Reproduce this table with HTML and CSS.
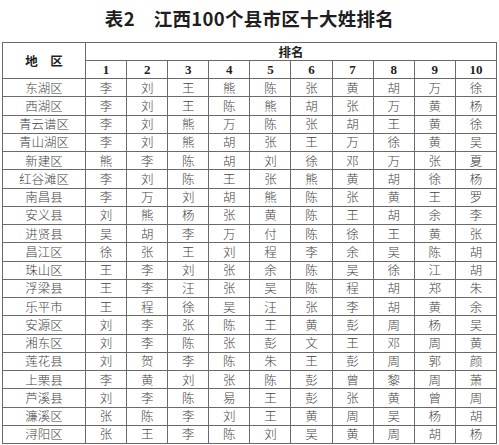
FILE: index.html
```html
<!DOCTYPE html>
<html lang="zh">
<head>
<meta charset="utf-8">
<title>江西100个县市区十大姓排名</title>
<link rel="stylesheet" href="styles.css">
</head>
<body>
<h1 class="title">表2　江西100个县市区十大姓排名</h1>
<table class="rank">
<colgroup><col class="c-area"><col span="10" class="c-num"></colgroup>
<thead>
<tr class="hrow"><th rowspan="2" class="area-h">地　区</th><th colspan="10">排名</th></tr>
<tr class="hrow num"><th>1</th><th>2</th><th>3</th><th>4</th><th>5</th><th>6</th><th>7</th><th>8</th><th>9</th><th>10</th></tr>
</thead>
<tbody>
<tr><td>东湖区</td><td>李</td><td>刘</td><td>王</td><td>熊</td><td>陈</td><td>张</td><td>黄</td><td>胡</td><td>万</td><td>徐</td></tr>
<tr><td>西湖区</td><td>李</td><td>刘</td><td>王</td><td>陈</td><td>熊</td><td>胡</td><td>张</td><td>万</td><td>黄</td><td>杨</td></tr>
<tr><td>青云谱区</td><td>李</td><td>刘</td><td>熊</td><td>万</td><td>陈</td><td>张</td><td>胡</td><td>王</td><td>黄</td><td>徐</td></tr>
<tr><td>青山湖区</td><td>李</td><td>刘</td><td>熊</td><td>胡</td><td>张</td><td>王</td><td>万</td><td>徐</td><td>黄</td><td>吴</td></tr>
<tr><td>新建区</td><td>熊</td><td>李</td><td>陈</td><td>胡</td><td>刘</td><td>徐</td><td>邓</td><td>万</td><td>张</td><td>夏</td></tr>
<tr><td>红谷滩区</td><td>李</td><td>刘</td><td>陈</td><td>王</td><td>张</td><td>熊</td><td>黄</td><td>胡</td><td>徐</td><td>杨</td></tr>
<tr><td>南昌县</td><td>李</td><td>万</td><td>刘</td><td>胡</td><td>熊</td><td>陈</td><td>张</td><td>黄</td><td>王</td><td>罗</td></tr>
<tr><td>安义县</td><td>刘</td><td>熊</td><td>杨</td><td>张</td><td>黄</td><td>陈</td><td>王</td><td>胡</td><td>余</td><td>李</td></tr>
<tr><td>进贤县</td><td>吴</td><td>胡</td><td>李</td><td>万</td><td>付</td><td>陈</td><td>徐</td><td>王</td><td>黄</td><td>张</td></tr>
<tr><td>昌江区</td><td>徐</td><td>张</td><td>王</td><td>刘</td><td>程</td><td>李</td><td>余</td><td>吴</td><td>陈</td><td>胡</td></tr>
<tr><td>珠山区</td><td>王</td><td>李</td><td>刘</td><td>张</td><td>余</td><td>陈</td><td>吴</td><td>徐</td><td>江</td><td>胡</td></tr>
<tr><td>浮梁县</td><td>王</td><td>李</td><td>汪</td><td>张</td><td>吴</td><td>陈</td><td>程</td><td>胡</td><td>郑</td><td>朱</td></tr>
<tr><td>乐平市</td><td>王</td><td>程</td><td>徐</td><td>吴</td><td>汪</td><td>张</td><td>李</td><td>胡</td><td>黄</td><td>余</td></tr>
<tr><td>安源区</td><td>刘</td><td>李</td><td>张</td><td>陈</td><td>王</td><td>黄</td><td>彭</td><td>周</td><td>杨</td><td>吴</td></tr>
<tr><td>湘东区</td><td>刘</td><td>李</td><td>陈</td><td>张</td><td>彭</td><td>文</td><td>王</td><td>邓</td><td>周</td><td>黄</td></tr>
<tr><td>莲花县</td><td>刘</td><td>贺</td><td>李</td><td>陈</td><td>朱</td><td>王</td><td>彭</td><td>周</td><td>郭</td><td>颜</td></tr>
<tr><td>上栗县</td><td>李</td><td>黄</td><td>刘</td><td>张</td><td>陈</td><td>彭</td><td>曾</td><td>黎</td><td>周</td><td>萧</td></tr>
<tr><td>芦溪县</td><td>刘</td><td>李</td><td>陈</td><td>易</td><td>王</td><td>彭</td><td>张</td><td>黄</td><td>曾</td><td>周</td></tr>
<tr><td>濂溪区</td><td>张</td><td>陈</td><td>李</td><td>刘</td><td>王</td><td>黄</td><td>周</td><td>吴</td><td>杨</td><td>胡</td></tr>
<tr><td>浔阳区</td><td>张</td><td>王</td><td>李</td><td>陈</td><td>刘</td><td>吴</td><td>黄</td><td>周</td><td>胡</td><td>杨</td></tr>
</tbody>
</table>
</body>
</html>
```

FILE: styles.css
```css
html, body {
  margin: 0;
  padding: 0;
  background: #ffffff;
}

body {
  font-family: "Noto Sans CJK SC", "Noto Sans", sans-serif;
  color: #3a3a3a;
}

.title {
  margin: 0;
  padding-top: 6px;
  height: 36px;
  box-sizing: border-box;
  text-align: center;
  font-size: 18.5px;
  line-height: 24px;
  font-weight: 700;
  color: #1e1e1e;
  letter-spacing: 0.3px;
}

.rank {
  margin-left: 2px;
  margin-top: 6px;
  width: 495px;
  border-collapse: collapse;
  table-layout: fixed;
}

.c-area { width: 83px; }

.rank th,
.rank td {
  border: 1px solid #6a6a6a;
  padding: 0;
  text-align: center;
  vertical-align: middle;
  font-size: 12.5px;
  line-height: 16px;
}

.rank th {
  font-weight: 700;
  color: #1e1e1e;
}

.hrow { height: 18px; }

.area-h { letter-spacing: 0; }

.num th {
  font-family: "Liberation Serif", "Noto Sans CJK SC", serif;
  font-size: 13px;
}

.rank tbody tr { height: 18.25px; }

.rank td {
  font-weight: 300;
  color: #444444;
}
```
